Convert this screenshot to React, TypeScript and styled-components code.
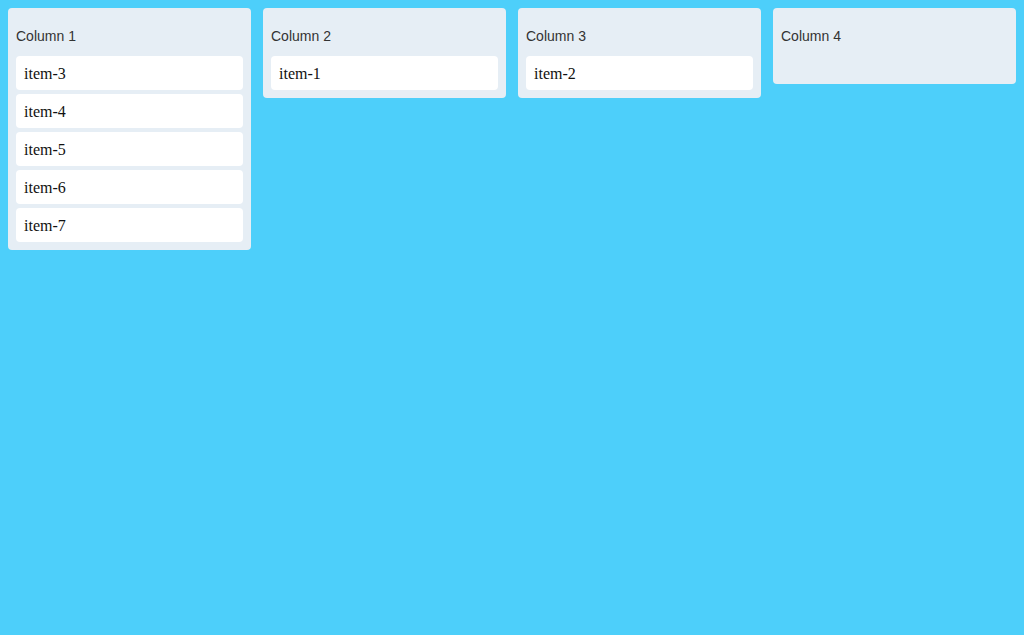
import React from "react";
import styled, { createGlobalStyle } from "styled-components";

const Global = createGlobalStyle`
  html, body { margin: 0; padding: 0; }
  body { background: #4dcffa; min-height: 635px; }
`;

const Board = styled.div`
  display: flex;
  gap: 12px;
  padding: 8px;
  align-items: flex-start;
`;

const Column = styled.div`
  flex: 1;
  background: #e6eef5;
  border-radius: 4px;
  padding: 8px;
  display: flex;
  flex-direction: column;
`;

const Header = styled.div`
  height: 40px;
  display: flex;
  align-items: center;
  font-family: "Liberation Sans", Arial, sans-serif;
  font-size: 14px;
  color: #333;
`;

const List = styled.div`
  display: flex;
  flex-direction: column;
  gap: 4px;
  min-height: 20px;
`;

const Card = styled.div`
  background: #fff;
  border-radius: 4px;
  padding: 9px 8px 7px;
  height: 34px;
  box-sizing: border-box;
  font-family: "Liberation Serif", "Times New Roman", serif;
  font-size: 16px;
  line-height: 18px;
  color: #111;
`;

const columns = [
  { title: "Column 1", items: ["item-3", "item-4", "item-5", "item-6", "item-7"] },
  { title: "Column 2", items: ["item-1"] },
  { title: "Column 3", items: ["item-2"] },
  { title: "Column 4", items: [] as string[] },
];

export default function App() {
  return (
    <>
      <Global />
      <Board>
        {columns.map((c) => (
          <Column key={c.title}>
            <Header>{c.title}</Header>
            <List>
              {c.items.map((i) => (
                <Card key={i}>{i}</Card>
              ))}
            </List>
          </Column>
        ))}
      </Board>
    </>
  );
}
